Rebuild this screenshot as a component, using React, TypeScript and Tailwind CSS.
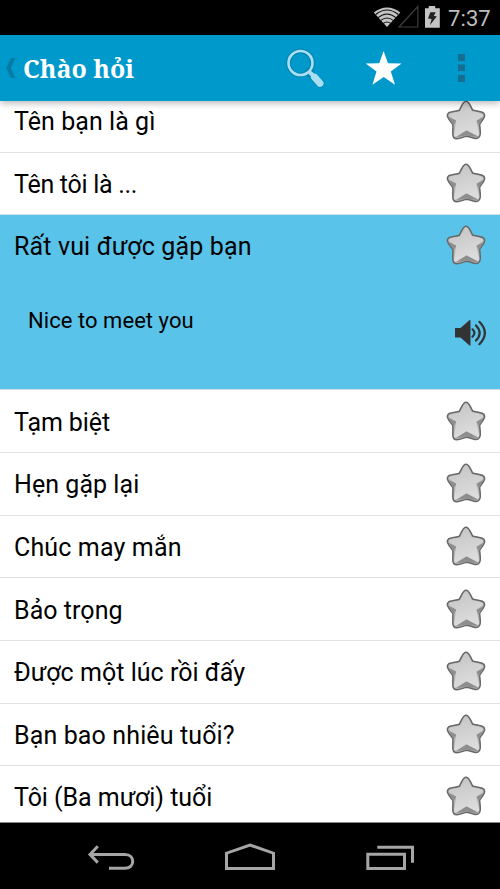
import React from "react";

function GreyStar() {
  return (
    <svg className="h-10 w-10 shrink-0" viewBox="0 0 40 40">
      <defs>
        <linearGradient id="face" x1="0" y1="0" x2="0.3" y2="1">
          <stop offset="0" stopColor="#c4c4c4" />
          <stop offset="1" stopColor="#dcdcdc" />
        </linearGradient>
      </defs>
      <path
        d="M20 1.3C22 1.3 23.2 3.3 24.4 5.6L26.7 10.1C29.6 10.6 33.5 11 36.3 12.3C38.8 13.5 39 15.3 38.2 17.3C37.2 19.7 35.2 22 33.6 24.2C33.9 27.7 34.7 31.6 34.1 34.8C33.5 38.4 31 38.8 28 38.2C25.2 37.6 22.7 36.3 20.6 36.3C17.6 36.8 14.2 38.7 11 38.7C7.3 38.7 6.8 36.8 6.8 33.9L6.9 24.6C5.2 22.3 2.7 19.5 1.7 17C.7 14.4 2 12.8 4.7 12.1C7.5 11.3 10.7 11 13.4 10.2L15.7 5.6C16.9 3.3 18 1.3 20 1.3Z"
        fill="#b2b2b2"
        stroke="#686868"
        strokeWidth="1.5"
      />
      <path d="M2.8 17L10.5 20.4L7.6 25.2Z M37.6 17L30.4 20.7L32.9 25.2Z M20.5 30L9.5 36.8Q14 37 20.6 35.2Q27 37.3 32 36.4Z" fill="#8e8e8e" />
      <path
        d="M20 2.3C21.5 2.3 22.7 5 23.7 7L25.8 11.2C29.6 11.8 34 12.2 36.4 13.9Q38 15.6 35.5 17.3L30.3 20.8L33.3 34Q32.9 37 30.5 35.6L20.5 30.2L11.8 35.7Q8.3 38 8 34.9L10.2 20.5L3.7 16.7Q1.8 14.5 4.5 13.5C7.5 12.4 11.1 12.2 14.1 11.2L16.3 7C17.4 4.8 18.4 2.3 20 2.3Z"
        fill="url(#face)"
      />
    </svg>
  );
}

function StatusBar() {
  return (
    <div className="flex h-[35px] shrink-0 items-center justify-end bg-black">
      <svg className="h-[35px] w-[76px]" viewBox="0 0 76 35">
        <path d="M13 27L-.3 12.4Q13 2.4 26.3 12.4Z" fill="#c4c4c4" />
        <g fill="none" stroke="#111" strokeWidth="1.1">
          <path d="M1.7 14.5Q13 5.5 24.3 14.5" />
          <path d="M4 17.6Q13 10.3 22 17.6" />
          <path d="M6.5 20.6Q13 15.5 19.5 20.6" />
          <path d="M9.2 23.5Q13 20.6 16.8 23.5" />
        </g>
        <path d="M25 27H43.8V6.5Z" fill="none" stroke="#3e3e3e" strokeWidth="1.2" />
        <path d="M51 8.2H54.7V6H61.2V8.2H65.8V27.8H51Z" fill="#c4c4c4" />
        <path d="M56.3 12.2H61.8L59.8 15.8L62.8 16.4L56 25L57.6 19.1L54 18.5Z" fill="#222" />
      </svg>
      <span className="-ml-0.5 w-[52px] pt-0.5 font-['Roboto',sans-serif] text-[22px] leading-6 tracking-[0.1px] text-[#bdbdbd]">
        7:37
      </span>
    </div>
  );
}

function ActionBar() {
  return (
    <header className="z-10 flex h-[66px] shrink-0 items-center bg-[#0099cc] shadow-[0_2px_7px_rgba(0,0,0,0.3)]">
      <svg className="h-[66px] w-[23px]" viewBox="0 0 23 66">
        <path d="M10.8 23H15.2L10.8 33L15.2 43H10.8L6.3 33Z" fill="#087aa3" />
      </svg>
      <h1 className="flex-1 font-['Noto_Serif','Droid_Serif','DejaVu_Serif_Condensed','DejaVu_Serif',serif] text-[25px] leading-8 font-bold text-white">
        <span className="whitespace-nowrap">Chào hỏi</span>
      </h1>
      <svg className="h-[66px] w-[215px]" viewBox="285 0 215 66">
        <g fill="none" stroke="#08789e" strokeOpacity="0.5">
          <circle cx="300.5" cy="28" r="12" strokeWidth="5" />
          <path d="M309 37L320 48.5" strokeWidth="8" strokeLinecap="round" />
        </g>
        <circle cx="300.5" cy="28" r="12" fill="none" stroke="#a9dff1" strokeWidth="2.6" />
        <path d="M309.3 36.8L313 40.5" stroke="#a9dff1" strokeWidth="4" />
        <path d="M314.5 42.2L320 48.3" stroke="#a9dff1" strokeWidth="7" strokeLinecap="round" />
        <path d="M383.6 16L388 28.3L401.6 28.6L390.8 36.6L395 49.7L383.7 42L372.4 49.7L376.5 36.6L365.7 28.6L379.2 28.3Z" fill="#fff" />
        <path d="M458 19H465V26H458ZM458 29.5H465V36H458ZM458 40H465V47H458Z" fill="#166e90" />
      </svg>
    </header>
  );
}

function Row({ text, tracking = "" }: { text: string; tracking?: string }) {
  return (
    <div className="flex h-[62.6px] items-center justify-between pr-[14.5px] pl-[14px]">
      <span className={`pt-1 text-[25px] leading-8 whitespace-nowrap ${tracking}`}>{text}</span>
      <GreyStar />
    </div>
  );
}

function Speaker() {
  return (
    <svg className="h-[30px] w-[33px]" viewBox="0 0 33 30">
      <path d="M1 10H6.5L15 2.5Q16.5 1.5 16.5 3V27Q16.5 28.5 15 27L6.5 19.5H1Z" fill="#333" />
      <g fill="none" stroke="#333" strokeWidth="2.2" strokeLinecap="round">
        <path d="M18.5 11.3Q22.3 15 18.5 18.7" />
        <path d="M22 7.4Q29.3 15 22 22.6" />
        <path d="M25.4 3.8Q36.3 15 25.4 26.2" />
      </g>
    </svg>
  );
}

const before = [
  { text: "Tên bạn là gì", tracking: "tracking-[0.05px]" },
  { text: "Tên tôi là ...", tracking: "tracking-[-0.28px]" },
];
const after = [
  { text: "Tạm biệt", tracking: "tracking-[-0.1px]" },
  { text: "Hẹn gặp lại", tracking: "tracking-[0.05px]" },
  { text: "Chúc may mắn", tracking: "tracking-[0.15px]" },
  { text: "Bảo trọng", tracking: "tracking-[0.05px]" },
  { text: "Được một lúc rồi đấy", tracking: "tracking-[0.03px]" },
  { text: "Bạn bao nhiêu tuổi?", tracking: "tracking-[0.13px]" },
  { text: "Tôi (Ba mươi) tuổi", tracking: "tracking-[-0.05px]" },
];

function NavBar() {
  return (
    <nav className="flex h-[66px] shrink-0 items-center justify-center bg-black">
      <svg className="h-[66px] w-[340px]" viewBox="80 823 340 66" fill="none" stroke="#a6a6a6" strokeWidth="3">
        <path d="M90 854.4H125C135.3 854.4 135.3 868.3 125 868.3H109" />
        <path d="M97.8 846.3L90 854.4L97.8 862.6" />
        <path d="M226.5 868.4V853.2L250 845L273.5 853.2V868.4Z" />
        <path d="M367.8 854.3H404.5V868.4H367.8Z" />
        <path d="M377.3 847.3H412.5V862.8" />
      </svg>
    </nav>
  );
}

export default function App() {
  return (
    <div className="flex h-[889px] w-[500px] flex-col overflow-hidden bg-white font-['Roboto',sans-serif] text-black">
      <StatusBar />
      <ActionBar />
      <main className="h-[722px] shrink-0 overflow-hidden border-b border-[#888]">
        <div className="-mt-[12px]">
          {before.map((item) => (
            <div key={item.text} className="-mb-px border-b border-[#e2e2e2]">
              <Row text={item.text} tracking={item.tracking} />
            </div>
          ))}
          <div className="h-[175.4px] border-y border-[#cfdfe5] bg-[#5ac3ea]">
            <div className="-mt-px">
              <Row text="Rất vui được gặp bạn" tracking="tracking-[0.14px]" />
            </div>
            <div className="flex justify-between pt-[30px] pr-[13px] pl-[28px]">
              <span className="text-[22px] leading-7 tracking-[0.05px]">Nice to meet you</span>
              <div className="pt-[11px]">
                <Speaker />
              </div>
            </div>
          </div>
          {after.map((item) => (
            <div key={item.text} className="-mb-px border-b border-[#e2e2e2]">
              <Row text={item.text} tracking={item.tracking} />
            </div>
          ))}
        </div>
      </main>
      <NavBar />
    </div>
  );
}
